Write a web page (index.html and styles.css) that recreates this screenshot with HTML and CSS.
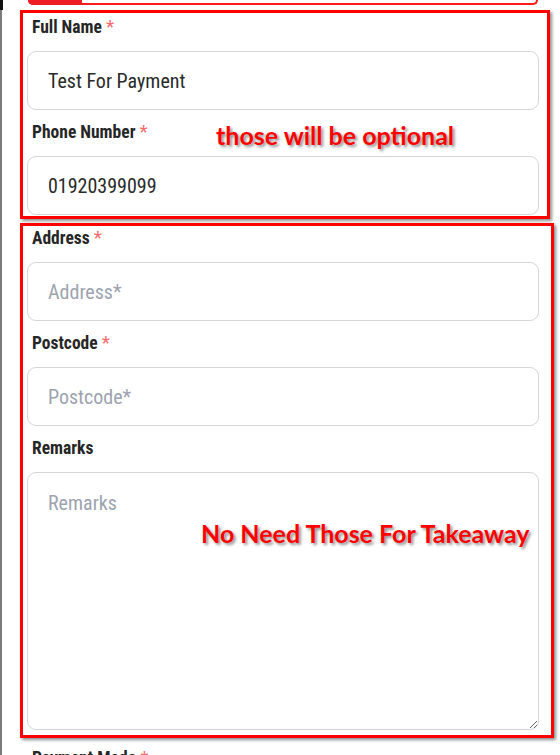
FILE: index.html
```html
<!DOCTYPE html>
<html lang="en">
<head>
<meta charset="utf-8">
<title>Checkout form</title>
<link rel="stylesheet" href="styles.css">
</head>
<body>
<div class="page">
  <div class="topbar">
    <div class="corner"></div>
    <div class="tabline"><div class="tabfill"></div></div>
  </div>

  <div class="mark mark-one">
    <div class="field">
      <label class="label">Full Name <span class="req">*</span></label>
      <input class="input" type="text" value="Test For Payment">
    </div>
    <div class="field">
      <label class="label">Phone Number <span class="req">*</span></label>
      <input class="input" type="text" value="01920399099">
    </div>
    <div class="note note-one">those will be optional</div>
  </div>

  <div class="mark mark-two">
    <div class="field">
      <label class="label">Address <span class="req">*</span></label>
      <input class="input" type="text" placeholder="Address*">
    </div>
    <div class="field">
      <label class="label">Postcode <span class="req">*</span></label>
      <input class="input" type="text" placeholder="Postcode*">
    </div>
    <div class="field">
      <label class="label">Remarks</label>
      <textarea class="input textarea" placeholder="Remarks"></textarea>
    </div>
    <div class="note note-two">No Need Those For Takeaway</div>
  </div>

  <div class="after">
    <label class="label">Payment Mode <span class="req">*</span></label>
  </div>
</div>
</body>
</html>
```

FILE: styles.css
```css
html, body {
  margin: 0;
  padding: 0;
  background: #ffffff;
  height: 755px;
  overflow: hidden;
}

.page {
  position: relative;
  border-left: 2px solid #7b7b7b;
  padding-left: 18px;
  height: 755px;
  box-sizing: border-box;
  font-family: Roboto, "Noto Sans", sans-serif;
  font-stretch: 80%;
}

.topbar {
  display: flex;
  align-items: flex-start;
  height: 10px;
  margin-left: -20px;
}

.corner {
  width: 3px;
  height: 10px;
  background: #111;
}

.tabline {
  margin-left: 25px;
  width: 506px;
  height: 3px;
  border: 2px solid #ff1a1a;
  border-top: none;
  border-radius: 0 0 6px 6px;
  display: flex;
}

.tabfill {
  width: 54px;
  height: 5px;
  margin-left: -2px;
  background: #ee1c25;
  border-radius: 0 0 0 7px;
}

.mark {
  position: relative;
  border: 3px solid #ff0000;
  box-shadow: 2px 2px 3px rgba(0, 0, 0, 0.45);
  display: flex;
  flex-direction: column;
  gap: 10px;
}

.mark-one {
  width: 518px;
  padding: 2px 2px 1px 4px;
}

.mark-two {
  width: 520px;
  margin-top: 4px;
  padding: 0 4px 5px 4px;
}

.field {
  display: flex;
  flex-direction: column;
  gap: 12px;
}

.label {
  display: block;
  padding-left: 5px;
  font-size: 17.5px;
  line-height: 24px;
  font-weight: 700;
  color: #262626;
}

.req {
  color: #f46a6a;
  font-weight: 400;
  font-size: 19px;
}

.input {
  box-sizing: border-box;
  width: 512px;
  height: 59px;
  margin: 0;
  padding: 0 20px;
  border: 1px solid #d6d6d6;
  border-radius: 9px;
  background: #ffffff;
  font-family: Roboto, "Noto Sans", sans-serif;
  font-stretch: 80%;
  font-size: 20px;
  color: #2a2a2a;
  outline: none;
}

.input::placeholder {
  color: #9ca3af;
}

.textarea {
  height: 258px;
  padding: 18px 20px;
  resize: vertical;
  line-height: 24px;
}

.note {
  position: absolute;
  font-family: Lato, "Noto Sans", sans-serif;
  font-weight: 700;
  color: #ff0000;
  text-shadow: 2px 2px 3px rgba(0, 0, 0, 0.45);
  white-space: nowrap;
  font-size: 25px;
  line-height: 30px;
}

.note-one {
  left: 193px;
  top: 107px;
}

.note-two {
  left: 178px;
  top: 292px;
}

.after {
  padding-top: 8px;
  padding-left: 7px;
}
```
